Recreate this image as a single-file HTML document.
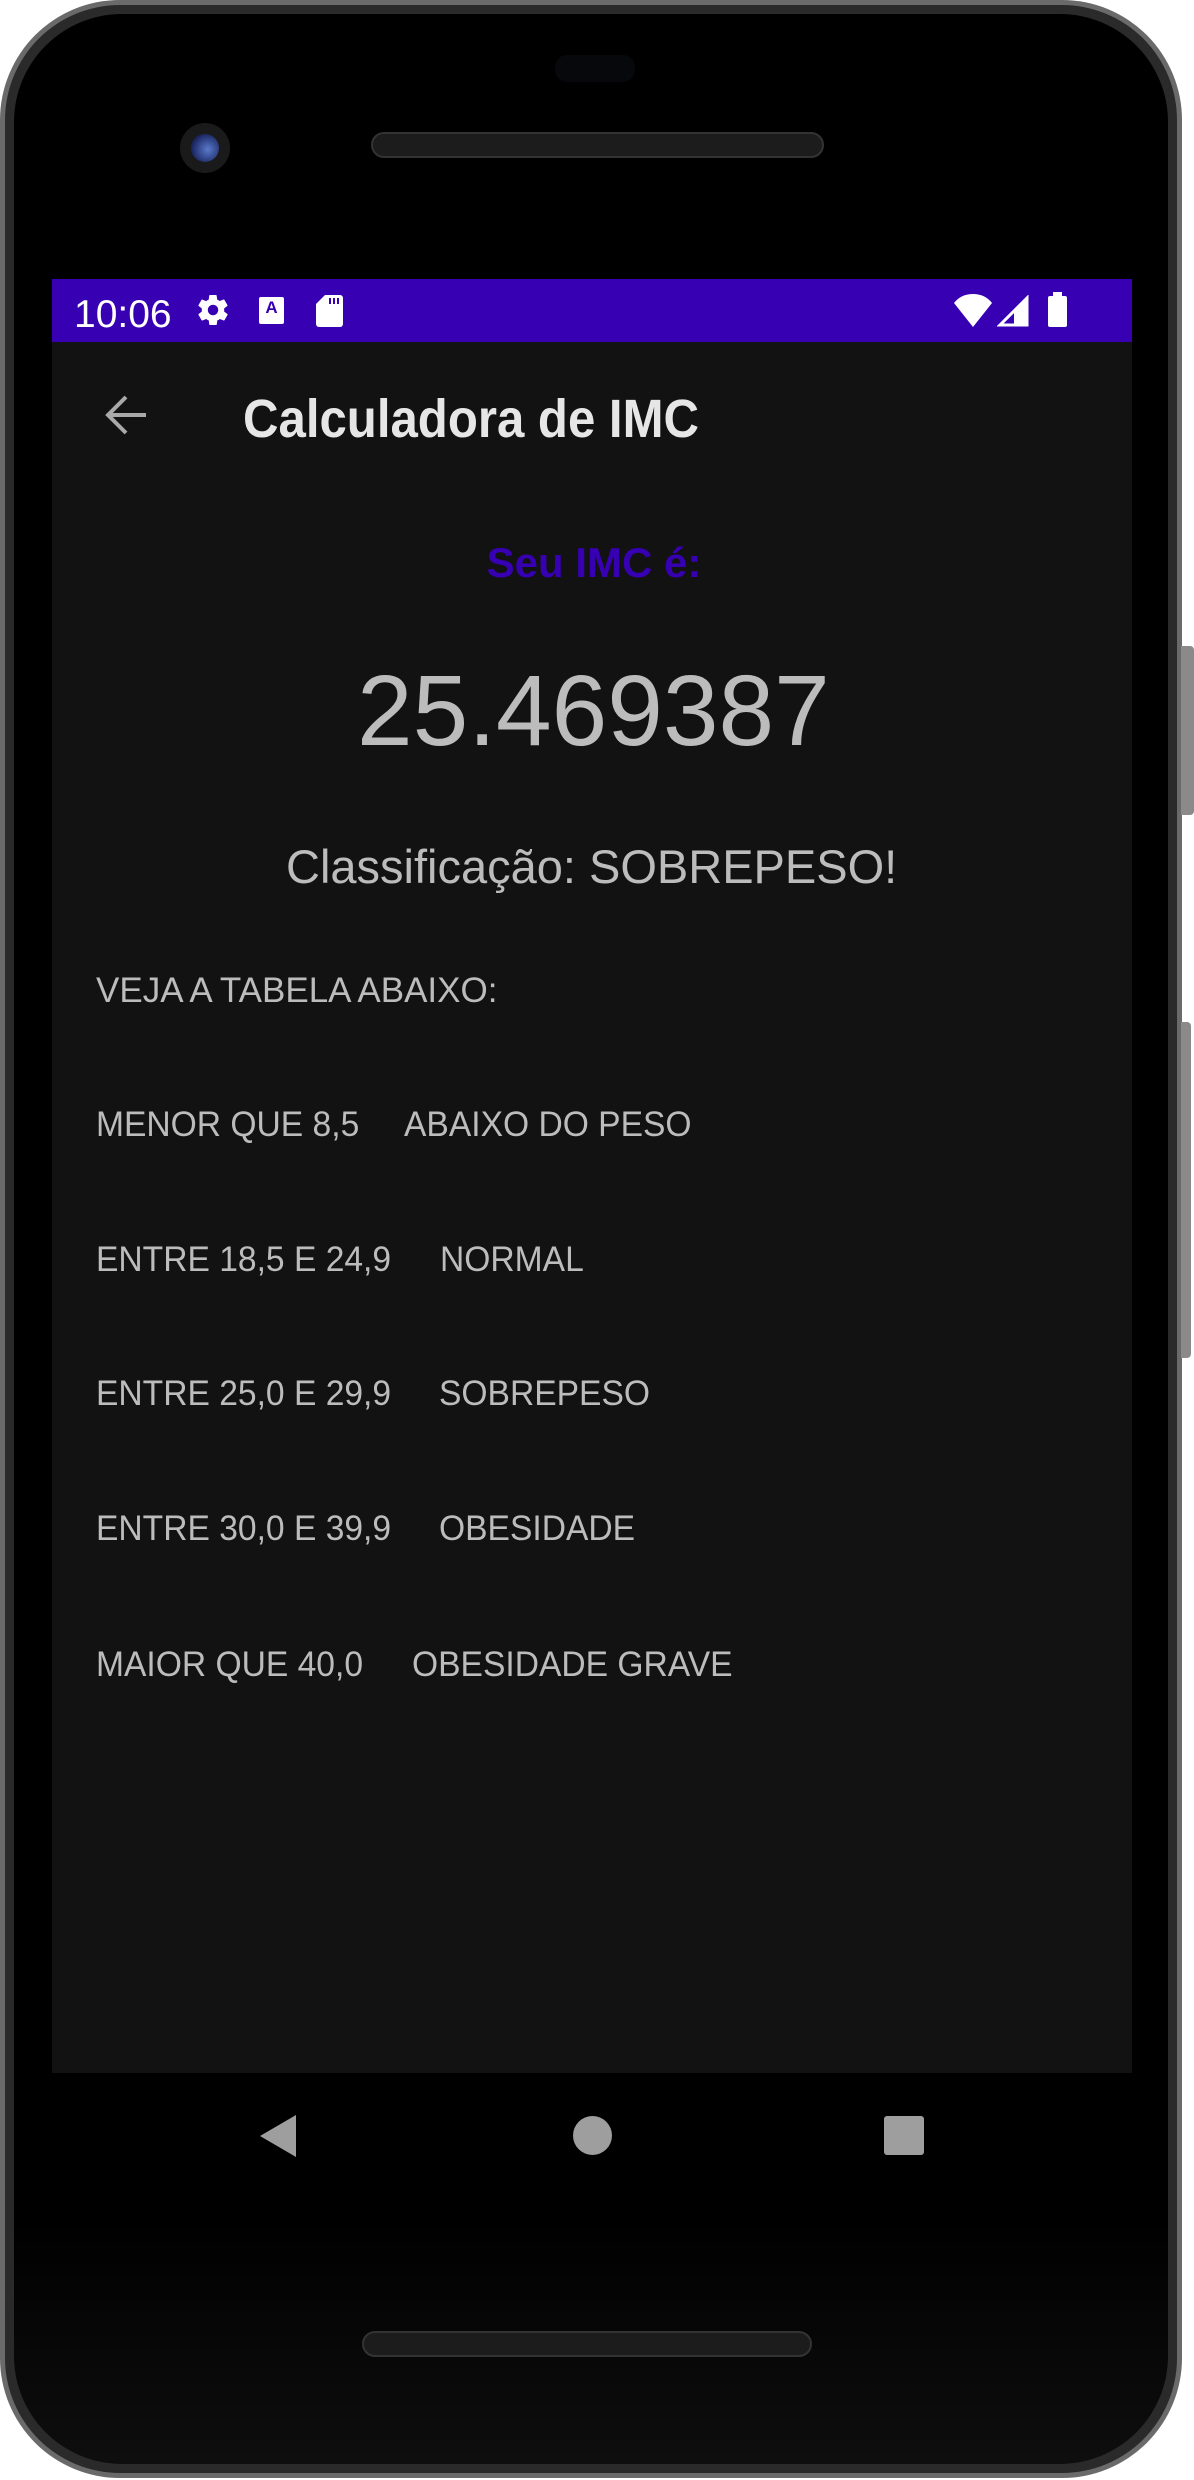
<!DOCTYPE html>
<html><head><meta charset="utf-8"><style>
*{margin:0;padding:0;box-sizing:border-box}
html,body{width:1194px;height:2480px;background:#fff;overflow:hidden;font-family:"Liberation Sans",sans-serif}
.phone{position:absolute;left:0;top:0;width:1182px;height:2478px;border-radius:120px;background:#6a6a6a;}
.phone2{position:absolute;left:5px;top:5px;width:1172px;height:2468px;border-radius:115px;background:#2a2a2a;}
.body{position:absolute;left:14px;top:14px;width:1154px;height:2450px;border-radius:108px;background:linear-gradient(#000 0%,#000 90%,#0e0e0e 100%);}
.btn{position:absolute;left:1181px;width:13px;background:#8a8a8a;border-radius:0 4px 4px 0}
.screen{position:absolute;left:52px;top:279px;width:1080px;height:1794px;background:#121212}
.status{position:absolute;left:52px;top:279px;width:1080px;height:63px;background:#3700b3}
.t{position:absolute;white-space:nowrap;color:#bcbcbc;line-height:1}
.r{font-size:35px;transform:scaleX(0.96);transform-origin:left}
</style></head><body>
<div class="phone"></div><div class="phone2"></div><div class="body"></div>
<div class="btn" style="top:646px;height:169px"></div>
<div class="btn" style="top:1022px;height:336px;left:1181px;width:10px"></div>
<div style="position:absolute;left:555px;top:55px;width:80px;height:27px;border-radius:12px;background:#07080b"></div>
<div style="position:absolute;left:371px;top:132px;width:453px;height:26px;border-radius:13px;background:#1c1c1c;border:2px solid #333"></div>
<div style="position:absolute;left:180px;top:123px;width:50px;height:50px;border-radius:50%;background:#1a1a1a"></div>
<div style="position:absolute;left:191px;top:134px;width:28px;height:28px;border-radius:50%;background:radial-gradient(circle at 60% 55%,#5a7acc,#1a2560 70%)"></div>

<div class="screen"></div>
<div class="status"></div>
<div class="t" style="left:74px;top:295px;font-size:39px;color:#fff">10:06</div>
<svg style="position:absolute;left:194px;top:292px" width="38" height="36" viewBox="0 0 24 24"><path fill="#fff" d="M19.4 13c.04-.3.06-.65.06-1s-.02-.7-.07-1l2.1-1.65c.2-.15.24-.42.12-.64l-2-3.46c-.12-.22-.4-.3-.6-.22l-2.5 1c-.52-.4-1.08-.73-1.7-.98l-.37-2.65A.5.5 0 0 0 14 2h-4a.5.5 0 0 0-.5.42l-.37 2.65c-.62.25-1.180.58-1.7.98l-2.5-1a.5.5 0 0 0-.6.22l-2 3.46c-.13.22-.08.49.12.64L4.57 11c-.05.32-.07.66-.07 1s.02.68.07 1l-2.1 1.650c-.2.15-.25.42-.12.64l2 3.46c.12.22.4.3.6.22l2.5-1c.52.4 1.08.73 1.7.98l.37 2.65c.04.24.25.42.5.42h4c.25 0 .46-.18.5-.42l.37-2.65c.62-.25 1.18-.58 1.7-.98l2.5 1c.22.08.48 0 .6-.22l2-3.46c.12-.22.07-.49-.12-.64L19.4 13zM12 15.5A3.5 3.5 0 1 1 12 8.5a3.5 3.5 0 0 1 0 7z"/></svg>
<div style="position:absolute;left:259px;top:297px;width:25px;height:27px;background:#fff;border-radius:2px;color:#3700b3;font:bold 17px 'Liberation Sans',sans-serif;text-align:center;line-height:22px">A</div>
<svg style="position:absolute;left:316px;top:295px" width="27" height="32" viewBox="0 0 27 32"><path fill="#fff" d="M9 0h15a3 3 0 0 1 3 3v26a3 3 0 0 1-3 3H3a3 3 0 0 1-3-3V9z"/><rect x="13" y="3" width="2" height="6" fill="#3700b3"/><rect x="17" y="3" width="2" height="6" fill="#3700b3"/><rect x="21" y="3" width="2" height="6" fill="#3700b3"/></svg>
<svg style="position:absolute;left:953px;top:293px" width="40" height="34" viewBox="0 0 40 34"><path fill="#fff" d="M20 34L1 10Q8 1 20 1T39 10z"/></svg>
<svg style="position:absolute;left:997px;top:295px" width="33" height="32" viewBox="0 0 33 32"><path fill="none" stroke="#fff" stroke-width="3" d="M30 3L3 30h27z"/><path fill="#fff" d="M30 3v27H17V16z"/></svg>
<div style="position:absolute;left:1048px;top:296px;width:19px;height:31px;background:#fff;border-radius:2px"></div>
<div style="position:absolute;left:1053px;top:292px;width:9px;height:5px;background:#fff"></div>

<svg style="position:absolute;left:104px;top:394px" width="44" height="42" viewBox="0 0 44 42"><path fill="none" stroke="#a9a9a9" stroke-width="4" d="M42 21H6M22 3L4 21l18 18"/></svg>
<div class="t" style="left:243px;top:392px;font-size:54px;font-weight:bold;color:#e6e6e6;transform:scaleX(0.91);transform-origin:left">Calculadora de IMC</div>

<div class="t" style="left:0;width:1188px;text-align:center;top:542px;font-size:42px;font-weight:bold;color:#3700b3">Seu IMC é:</div>
<div class="t" style="left:357px;top:661px;font-size:100px">25.469387</div>
<div class="t" style="left:286px;top:843px;font-size:47px">Classificação: SOBREPESO!</div>

<div class="t r" style="left:96px;top:973px;transform:scaleX(1.0)">VEJA A TABELA ABAIXO:</div>
<div class="t r" style="left:96px;top:1107px">MENOR QUE 8,5</div>
<div class="t r" style="left:404px;top:1107px">ABAIXO DO PESO</div>
<div class="t r" style="left:96px;top:1242px">ENTRE 18,5 E 24,9</div>
<div class="t r" style="left:440px;top:1242px">NORMAL</div>
<div class="t r" style="left:96px;top:1376px">ENTRE 25,0 E 29,9</div>
<div class="t r" style="left:439px;top:1376px">SOBREPESO</div>
<div class="t r" style="left:96px;top:1511px">ENTRE 30,0 E 39,9</div>
<div class="t r" style="left:439px;top:1511px">OBESIDADE</div>
<div class="t r" style="left:96px;top:1647px">MAIOR QUE 40,0</div>
<div class="t r" style="left:412px;top:1647px">OBESIDADE GRAVE</div>

<svg style="position:absolute;left:258px;top:2115px" width="40" height="42" viewBox="0 0 40 42"><path fill="#9e9e9e" d="M38 0v42L2 21z"/></svg>
<div style="position:absolute;left:573px;top:2116px;width:39px;height:39px;border-radius:50%;background:#9e9e9e"></div>
<div style="position:absolute;left:884px;top:2116px;width:40px;height:39px;border-radius:3px;background:#9e9e9e"></div>
<div style="position:absolute;left:362px;top:2331px;width:450px;height:26px;border-radius:13px;background:#1c1c1c;border:2px solid #333"></div>
</body></html>
